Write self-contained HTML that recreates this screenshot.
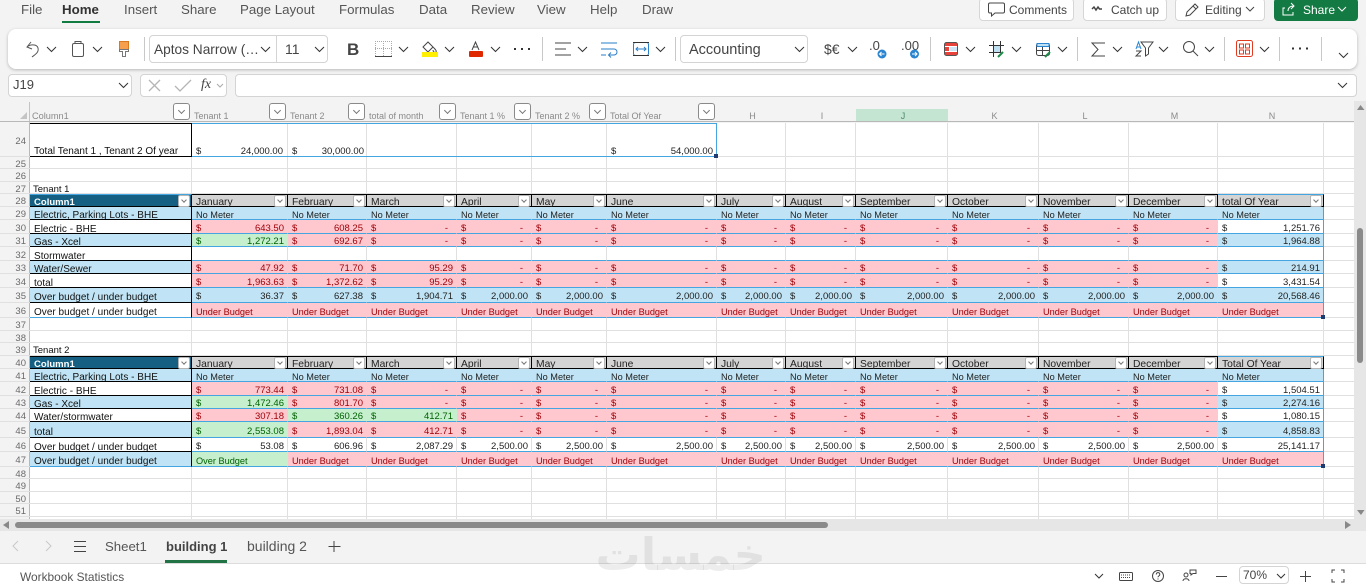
<!DOCTYPE html>
<html lang="en"><head><meta charset="utf-8"><title>Workbook</title>
<style>
html,body{margin:0;padding:0;width:1366px;height:585px;overflow:hidden;background:#f3f3f3;font-family:"Liberation Sans",sans-serif;color:#424242}
.l{position:absolute;white-space:nowrap}
.tab{top:1px;font-size:13.3px;line-height:17px;color:#555}
.btn{position:absolute;background:#fff;border:1px solid #d6d6d6;border-radius:4px;box-sizing:border-box;top:-2px;height:23px;font-size:12px;line-height:22px;color:#444;white-space:nowrap}
.box{position:absolute;background:#fff;border:1px solid #d4d4d4;border-radius:4px;box-sizing:border-box}
#rib{position:absolute;left:8px;top:29px;width:1349px;height:40px;background:#fff;border-radius:8px;box-shadow:0 1px 3px rgba(0,0,0,.25)}
#sheet{position:absolute;left:0;top:123px;width:1354px;height:396px;background:#fff;overflow:hidden}
#rh{position:absolute;left:0;top:0;width:30px;height:396px;background:#f3f3f3;border-right:1px solid #b8b8b8;box-sizing:border-box}
.v{position:absolute;top:0;width:1px;height:396px;background:#e0e0e0}
.r{position:absolute;left:0;width:1354px;box-sizing:border-box;top:calc(var(--t)*1px - 123px);height:calc(var(--h)*1px);line-height:calc(var(--h)*1px + 3px);display:grid;grid-template-rows:100%;grid-template-columns:30px 162px 96px 79px 90px 75px 75px 110px 69px 70px 92px 91px 90px 89px 106px 30px;border-bottom:1px solid #e0e0e0;font-size:9.5px;color:#222}
.r em{font-style:normal;color:#6a6a6a;text-align:right;padding-right:3px;background:#f3f3f3;border-right:1px solid #b8b8b8;font-size:9.5px}
.r b{font-weight:normal;position:relative;white-space:nowrap;box-sizing:border-box;overflow:hidden;text-align:right;padding-right:3px;border-right:1px solid transparent;border-bottom:1px solid transparent;margin-bottom:-1px}
.r i{font-style:normal;position:absolute;left:4px;top:0}
.r b.d{padding-right:8px}
.T b{border-bottom-color:#45a5e0}
.P b{background:#ffc7ce;color:#9c0006}
.U b{background:#c0e4f5;color:#222}
.L b{text-align:left;padding-left:4px;padding-right:0;font-size:9.2px}
.r b.a{text-align:left;padding-left:4px;padding-top:1px;background:#fff;color:#111;border-right-color:#000;border-bottom-color:#000;font-size:10px;letter-spacing:.02px}
.r b.au{background:#c0e4f5}
.r b.ab{border-bottom-color:#45a5e0}
.r b.n{background:#fff;color:#222;border-right-color:#45a5e0}
.r b.nu{background:#c0e4f5;color:#222}
.r b.np{background:#ffc7ce;color:#9c0006}
.r b.g{background:#c6efce;color:#006100}
.r b.z{text-align:left;padding-left:3px;color:#111}
.H b{background:#d4d4d4;color:#222;text-align:left;padding-left:4px;padding-right:0;font-size:10.3px;border-top:1px solid #000;border-right-color:#000;border-bottom-color:#000;overflow:visible;line-height:15px}
.r.H b.a{background:#156082;color:#fff;font-weight:bold;font-size:9.5px;border-top-color:#000;padding-top:0}
.r.H b.n{background:#d4d4d4;border-top-color:#45a5e0;border-bottom-color:#000;border-right-color:#000}
.H b::after{content:"";position:absolute;right:1px;top:0;width:12px;height:12px;background:#fff;border:1px solid #b5b5b5;border-radius:2px;box-sizing:border-box}
.H b::before{content:"";position:absolute;right:5px;top:3px;width:3px;height:3px;border-right:1px solid #777;border-bottom:1px solid #777;transform:rotate(45deg);z-index:2}
.ch{position:absolute;top:110px;height:12px;line-height:13px;font-size:9px;color:#8a8a8a;white-space:nowrap}
.cc{text-align:center}
.fb{position:absolute;top:103px;width:17px;height:17px;box-sizing:border-box;background:#fff;border:1px solid #8a8a8a;border-radius:3px}
.fb::before{content:"";position:absolute;left:5px;top:4px;width:4px;height:4px;border-right:1px solid #777;border-bottom:1px solid #777;transform:rotate(45deg)}
.cell24{position:absolute;top:22px;font-size:9.5px;line-height:13px;color:#222}
svg{position:absolute;left:0;top:0}
</style></head><body>

<div class="l tab" style="left:21px">File</div>
<div class="l tab" style="left:62px;font-weight:bold;color:#333">Home</div>
<div style="position:absolute;left:62px;top:21px;width:38px;height:2px;background:#107c41"></div>
<div class="l tab" style="left:124px">Insert</div>
<div class="l tab" style="left:181px">Share</div>
<div class="l tab" style="left:240px">Page Layout</div>
<div class="l tab" style="left:339px">Formulas</div>
<div class="l tab" style="left:419px">Data</div>
<div class="l tab" style="left:471px">Review</div>
<div class="l tab" style="left:537px">View</div>
<div class="l tab" style="left:590px">Help</div>
<div class="l tab" style="left:642px">Draw</div>

<div class="btn" style="left:979px;width:95px;padding-left:29px">Comments</div>
<div class="btn" style="left:1083px;width:84px;padding-left:27px">Catch up</div>
<div class="btn" style="left:1175px;width:90px;padding-left:29px">Editing</div>
<div class="btn" style="left:1274px;width:84px;padding-left:28px;background:#147a43;border-color:#147a43;color:#fff">Share</div>

<div id="rib"></div>
<div class="box" style="left:149px;top:35px;width:179px;height:28px"></div>
<div style="position:absolute;left:276px;top:36px;width:1px;height:26px;background:#d4d4d4"></div>
<div class="l" style="left:154px;top:41px;font-size:13.7px;line-height:17px;color:#444">Aptos Narrow (…</div>
<div class="l" style="left:285px;top:41px;font-size:14px;line-height:17px;color:#444">11</div>
<div class="l" style="left:347px;top:40px;font-size:17px;line-height:20px;font-weight:bold;color:#444">B</div>
<div class="box" style="left:680px;top:35px;width:128px;height:28px"></div>
<div class="l" style="left:689px;top:42px;font-size:14.5px;line-height:17px;color:#444">Accounting</div>
<div class="l" style="left:824px;top:41px;font-size:14px;line-height:17px;color:#444">$€</div>
<div class="l" style="left:869px;top:38px;font-size:13px;line-height:15px;color:#444">.0</div>
<div class="l" style="left:901px;top:38px;font-size:13px;line-height:15px;color:#444">.00</div>

<div class="box" style="left:8px;top:74px;width:124px;height:23px"></div>
<div class="l" style="left:13px;top:77px;font-size:13px;line-height:16px;color:#444">J19</div>
<div class="box" style="left:140px;top:74px;width:87px;height:23px"></div>
<div class="box" style="left:235px;top:74px;width:1122px;height:23px"></div>
<div class="l" style="left:201px;top:77px;font-size:14px;line-height:16px;font-style:italic;font-family:'Liberation Serif',serif;color:#444">fx</div>

<!-- column headers -->
<div style="position:absolute;left:29px;top:102px;width:1px;height:21px;background:#c4c4c4"></div>
<div style="position:absolute;left:856px;top:109px;width:92px;height:12px;background:#c5e5d3;border-bottom:1px solid #107c41"></div>
<div style="position:absolute;left:0;top:121px;width:1354px;height:1px;background:#b8b8b8"></div>
<div class="ch" style="left:32px;font-size:9.2px">Column1</div>
<div class="ch" style="left:194px">Tenant 1</div>
<div class="ch" style="left:290px">Tenant 2</div>
<div class="ch" style="left:369px">total of month</div>
<div class="ch" style="left:460px">Tenant 1 %</div>
<div class="ch" style="left:535px">Tenant 2 %</div>
<div class="ch" style="left:610px">Total Of Year</div>
<div class="ch cc" style="left:718px;width:69px">H</div>
<div class="ch cc" style="left:787px;width:70px">I</div>
<div class="ch cc" style="left:857px;width:92px;color:#4c8a68">J</div>
<div class="ch cc" style="left:949px;width:91px">K</div>
<div class="ch cc" style="left:1040px;width:90px">L</div>
<div class="ch cc" style="left:1130px;width:89px">M</div>
<div class="ch cc" style="left:1219px;width:106px">N</div>
<div class="fb" style="left:173px"></div>
<div class="fb" style="left:269px"></div>
<div class="fb" style="left:348px"></div>
<div class="fb" style="left:439px"></div>
<div class="fb" style="left:514px"></div>
<div class="fb" style="left:589px"></div>
<div class="fb" style="left:698px"></div>

<div id="sheet">
<div id="rh"></div>
<div class="v" style="left:191px"></div><div class="v" style="left:287px"></div><div class="v" style="left:366px"></div><div class="v" style="left:456px"></div><div class="v" style="left:531px"></div><div class="v" style="left:606px"></div><div class="v" style="left:716px"></div><div class="v" style="left:785px"></div><div class="v" style="left:855px"></div><div class="v" style="left:947px"></div><div class="v" style="left:1038px"></div><div class="v" style="left:1128px"></div><div class="v" style="left:1217px"></div><div class="v" style="left:1323px"></div>

<div class="r" style="--t:123;--h:34"><em>24</em></div>
<div style="position:absolute;left:30px;top:0;width:162px;height:34px;box-sizing:border-box;border-top:1px solid #000;border-right:1px solid #000;border-bottom:1px solid #000;background:#fff;font-size:10px;color:#111;line-height:13px;padding:21px 0 0 4px;white-space:nowrap;overflow:hidden">Total Tenant 1 , Tenant 2 Of year</div>
<div style="position:absolute;left:192px;top:0;width:525px;height:34px;box-sizing:border-box;border:1px solid #45a5e0;border-left:0"></div>
<div class="cell24" style="left:196px">$</div>
<div class="cell24" style="left:192px;width:91px;text-align:right">24,000.00</div>
<div class="cell24" style="left:292px">$</div>
<div class="cell24" style="left:288px;width:76px;text-align:right">30,000.00</div>
<div class="cell24" style="left:611px">$</div>
<div class="cell24" style="left:607px;width:106px;text-align:right">54,000.00</div>
<div style="position:absolute;left:714px;top:31px;width:4px;height:4px;background:#1f3a6e"></div>

<div class="r" style="--t:157;--h:12"><em>25</em></div>
<div class="r" style="--t:169;--h:13"><em>26</em></div>
<div class="r" style="--t:182;--h:12"><em>27</em><b class="z">Tenant 1</b></div>
<div class="r H" style="--t:194;--h:13"><em>28</em><b class="a" style="border-top-color:#45a5e0">Column1</b><b>January</b><b>February</b><b>March</b><b>April</b><b>May</b><b>June</b><b>July</b><b>August</b><b>September</b><b>October</b><b>November</b><b>December</b><b class="n">total Of Year</b></div>
<div class="r T U L" style="--t:207;--h:13"><em>29</em><b class="a au">Electric, Parking Lots - BHE</b><b>No Meter</b><b>No Meter</b><b>No Meter</b><b>No Meter</b><b>No Meter</b><b>No Meter</b><b>No Meter</b><b>No Meter</b><b>No Meter</b><b>No Meter</b><b>No Meter</b><b>No Meter</b><b class="n nu">No Meter</b></div>
<div class="r T P" style="--t:220;--h:14"><em>30</em><b class="a">Electric - BHE</b><b><i>$</i>643.50</b><b><i>$</i>608.25</b><b class="d"><i>$</i>-</b><b class="d"><i>$</i>-</b><b class="d"><i>$</i>-</b><b class="d"><i>$</i>-</b><b class="d"><i>$</i>-</b><b class="d"><i>$</i>-</b><b class="d"><i>$</i>-</b><b class="d"><i>$</i>-</b><b class="d"><i>$</i>-</b><b class="d"><i>$</i>-</b><b class="n"><i>$</i>1,251.76</b></div>
<div class="r T P" style="--t:234;--h:13"><em>31</em><b class="a au">Gas - Xcel</b><b class="g"><i>$</i>1,272.21</b><b><i>$</i>692.67</b><b class="d"><i>$</i>-</b><b class="d"><i>$</i>-</b><b class="d"><i>$</i>-</b><b class="d"><i>$</i>-</b><b class="d"><i>$</i>-</b><b class="d"><i>$</i>-</b><b class="d"><i>$</i>-</b><b class="d"><i>$</i>-</b><b class="d"><i>$</i>-</b><b class="d"><i>$</i>-</b><b class="n nu"><i>$</i>1,964.88</b></div>
<div class="r T" style="--t:247;--h:14"><em>32</em><b class="a">Stormwater</b><b></b><b></b><b></b><b></b><b></b><b></b><b></b><b></b><b></b><b></b><b></b><b></b><b class="n"></b></div>
<div class="r T P" style="--t:261;--h:13"><em>33</em><b class="a au">Water/Sewer</b><b><i>$</i>47.92</b><b><i>$</i>71.70</b><b><i>$</i>95.29</b><b class="d"><i>$</i>-</b><b class="d"><i>$</i>-</b><b class="d"><i>$</i>-</b><b class="d"><i>$</i>-</b><b class="d"><i>$</i>-</b><b class="d"><i>$</i>-</b><b class="d"><i>$</i>-</b><b class="d"><i>$</i>-</b><b class="d"><i>$</i>-</b><b class="n nu"><i>$</i>214.91</b></div>
<div class="r T P" style="--t:274;--h:14"><em>34</em><b class="a">total</b><b><i>$</i>1,963.63</b><b><i>$</i>1,372.62</b><b><i>$</i>95.29</b><b class="d"><i>$</i>-</b><b class="d"><i>$</i>-</b><b class="d"><i>$</i>-</b><b class="d"><i>$</i>-</b><b class="d"><i>$</i>-</b><b class="d"><i>$</i>-</b><b class="d"><i>$</i>-</b><b class="d"><i>$</i>-</b><b class="d"><i>$</i>-</b><b class="n"><i>$</i>3,431.54</b></div>
<div class="r T U" style="--t:288;--h:15"><em>35</em><b class="a au">Over budget / under budget</b><b><i>$</i>36.37</b><b><i>$</i>627.38</b><b><i>$</i>1,904.71</b><b><i>$</i>2,000.00</b><b><i>$</i>2,000.00</b><b><i>$</i>2,000.00</b><b><i>$</i>2,000.00</b><b><i>$</i>2,000.00</b><b><i>$</i>2,000.00</b><b><i>$</i>2,000.00</b><b><i>$</i>2,000.00</b><b><i>$</i>2,000.00</b><b class="n nu"><i>$</i>20,568.46</b></div>
<div class="r T P L" style="--t:303;--h:15"><em>36</em><b class="a ab">Over budget / under budget</b><b>Under Budget</b><b>Under Budget</b><b>Under Budget</b><b>Under Budget</b><b>Under Budget</b><b>Under Budget</b><b>Under Budget</b><b>Under Budget</b><b>Under Budget</b><b>Under Budget</b><b>Under Budget</b><b>Under Budget</b><b class="n np">Under Budget</b></div>
<div class="r" style="--t:318;--h:13"><em>37</em></div>
<div class="r" style="--t:331;--h:12"><em>38</em></div>
<div class="r" style="--t:343;--h:13"><em>39</em><b class="z">Tenant 2</b></div>
<div class="r H" style="--t:356;--h:13"><em>40</em><b class="a">Column1</b><b>January</b><b>February</b><b>March</b><b>April</b><b>May</b><b>June</b><b>July</b><b>August</b><b>September</b><b>October</b><b>November</b><b>December</b><b class="n">Total Of Year</b></div>
<div class="r T U L" style="--t:369;--h:13"><em>41</em><b class="a au">Electric, Parking Lots - BHE</b><b>No Meter</b><b>No Meter</b><b>No Meter</b><b>No Meter</b><b>No Meter</b><b>No Meter</b><b>No Meter</b><b>No Meter</b><b>No Meter</b><b>No Meter</b><b>No Meter</b><b>No Meter</b><b class="n nu">No Meter</b></div>
<div class="r T P" style="--t:382;--h:14"><em>42</em><b class="a">Electric - BHE</b><b><i>$</i>773.44</b><b><i>$</i>731.08</b><b class="d"><i>$</i>-</b><b class="d"><i>$</i>-</b><b class="d"><i>$</i>-</b><b class="d"><i>$</i>-</b><b class="d"><i>$</i>-</b><b class="d"><i>$</i>-</b><b class="d"><i>$</i>-</b><b class="d"><i>$</i>-</b><b class="d"><i>$</i>-</b><b class="d"><i>$</i>-</b><b class="n"><i>$</i>1,504.51</b></div>
<div class="r T P" style="--t:396;--h:13"><em>43</em><b class="a au">Gas - Xcel</b><b class="g"><i>$</i>1,472.46</b><b><i>$</i>801.70</b><b class="d"><i>$</i>-</b><b class="d"><i>$</i>-</b><b class="d"><i>$</i>-</b><b class="d"><i>$</i>-</b><b class="d"><i>$</i>-</b><b class="d"><i>$</i>-</b><b class="d"><i>$</i>-</b><b class="d"><i>$</i>-</b><b class="d"><i>$</i>-</b><b class="d"><i>$</i>-</b><b class="n nu"><i>$</i>2,274.16</b></div>
<div class="r T P" style="--t:409;--h:13"><em>44</em><b class="a">Water/stormwater</b><b><i>$</i>307.18</b><b class="g"><i>$</i>360.26</b><b class="g"><i>$</i>412.71</b><b class="d"><i>$</i>-</b><b class="d"><i>$</i>-</b><b class="d"><i>$</i>-</b><b class="d"><i>$</i>-</b><b class="d"><i>$</i>-</b><b class="d"><i>$</i>-</b><b class="d"><i>$</i>-</b><b class="d"><i>$</i>-</b><b class="d"><i>$</i>-</b><b class="n"><i>$</i>1,080.15</b></div>
<div class="r T P" style="--t:422;--h:16"><em>45</em><b class="a au">total</b><b class="g"><i>$</i>2,553.08</b><b><i>$</i>1,893.04</b><b><i>$</i>412.71</b><b class="d"><i>$</i>-</b><b class="d"><i>$</i>-</b><b class="d"><i>$</i>-</b><b class="d"><i>$</i>-</b><b class="d"><i>$</i>-</b><b class="d"><i>$</i>-</b><b class="d"><i>$</i>-</b><b class="d"><i>$</i>-</b><b class="d"><i>$</i>-</b><b class="n nu"><i>$</i>4,858.83</b></div>
<div class="r T" style="--t:438;--h:14"><em>46</em><b class="a">Over budget / under budget</b><b><i>$</i>53.08</b><b><i>$</i>606.96</b><b><i>$</i>2,087.29</b><b><i>$</i>2,500.00</b><b><i>$</i>2,500.00</b><b><i>$</i>2,500.00</b><b><i>$</i>2,500.00</b><b><i>$</i>2,500.00</b><b><i>$</i>2,500.00</b><b><i>$</i>2,500.00</b><b><i>$</i>2,500.00</b><b><i>$</i>2,500.00</b><b class="n"><i>$</i>25,141.17</b></div>
<div class="r T P L" style="--t:452;--h:15"><em>47</em><b class="a au ab">Over budget / under budget</b><b class="g">Over Budget</b><b>Under Budget</b><b>Under Budget</b><b>Under Budget</b><b>Under Budget</b><b>Under Budget</b><b>Under Budget</b><b>Under Budget</b><b>Under Budget</b><b>Under Budget</b><b>Under Budget</b><b>Under Budget</b><b class="n np">Under Budget</b></div>
<div class="r" style="--t:467;--h:12"><em>48</em></div>
<div class="r" style="--t:479;--h:13"><em>49</em></div>
<div class="r" style="--t:492;--h:12"><em>50</em></div>
<div class="r" style="--t:504;--h:13"><em>51</em></div>
<div style="position:absolute;left:1321px;top:192px;width:4px;height:4px;background:#1f3a6e"></div>
<div style="position:absolute;left:1321px;top:341px;width:4px;height:4px;background:#1f3a6e"></div>
</div>

<!-- scrollbars -->
<div style="position:absolute;left:1354px;top:101px;width:12px;height:430px;background:#e6e6e6"></div>
<div style="position:absolute;left:1357px;top:228px;width:6px;height:135px;background:#8a8a8a;border-radius:3px"></div>
<div style="position:absolute;left:0;top:519px;width:1366px;height:12px;background:#e6e6e6"></div>
<div style="position:absolute;left:15px;top:522px;width:813px;height:6px;background:#8a8a8a;border-radius:3px"></div>

<!-- sheet tabs -->
<div class="l" style="left:105px;top:538px;font-size:13.2px;line-height:17px;color:#555">Sheet1</div>
<div class="l" style="left:166px;top:538px;font-size:13px;line-height:17px;font-weight:bold;color:#444">building 1</div>
<div style="position:absolute;left:165px;top:560px;width:62px;height:3px;background:#217346"></div>
<div class="l" style="left:247px;top:538px;font-size:14px;line-height:17px;color:#555">building 2</div>
<div style="position:absolute;left:0;top:563px;width:1366px;height:22px;background:#fff;border-top:1px solid #dcdcdc;box-sizing:border-box"></div>
<div class="l" style="left:20px;top:570px;font-size:11.9px;line-height:14px;color:#555">Workbook Statistics</div>
<div class="box" style="left:1239px;top:566px;width:50px;height:18px"></div>
<div class="l" style="left:1243px;top:568px;font-size:12px;line-height:15px;color:#444">70%</div>

<svg width="1366" height="585" viewBox="0 0 1366 585" fill="none" stroke="#444" stroke-width="1">
<!-- top button icons -->
<path d="M990 3h13a1.500 1.500 0 0 1 1.500 1.500v7a1.500 1.500 0 0 1-1.500 1.500h-8l-3.500 3v-3h-1.500a1.500 1.500 0 0 1-1.500-1.500v-7A1.500 1.500 0 0 1 990 3z"/>
<path d="M1092 9l2-2 2 3 2-3 1.500 2 2.500 0" stroke-width="1.500"/>
<path d="M1186 16l1-4 8-8 3 3-8 8zM1193 6l3 3"/>
<path d="M1246 7l4 4 4-4"/>
<path d="M1338 7l4 4 4-4" stroke="#fff"/>
<path d="M1285 8h-2v7h10v-3M1288 11c0-3 2-5 6-5M1291 3l3 3-3 3" stroke="#fff"/>
<!-- chevrons -->
<path d="M47 47l4.500 4.500 4.500-4.500M93 47l4.500 4.500 4.500-4.500M261 47l4.500 4.500 4.500-4.500M315 47l4.500 4.500 4.500-4.500M399 47l4.500 4.500 4.500-4.500M445 47l4.500 4.500 4.500-4.500M491 47l4.500 4.500 4.500-4.500M578 47l4.500 4.500 4.500-4.500M656 47l4.500 4.500 4.500-4.500M795 47l4.500 4.500 4.500-4.500M848 47l4.500 4.500 4.500-4.500M966 47l4.500 4.500 4.500-4.500M1012 47l4.500 4.500 4.500-4.500M1058 47l4.500 4.500 4.500-4.500M1113 47l4.500 4.500 4.500-4.500M1159 47l4.500 4.500 4.500-4.500M1205 47l4.500 4.500 4.500-4.500M1260 47l4.500 4.500 4.500-4.500M1339 53l4.500 4.500 4.500-4.500M119 83l4.500 4.500 4.500-4.500M1338 83l4.500 4.500 4.500-4.500M1095 574l4 4 4-4M1277 574l4 4 4-4" stroke="#333"/>
<path d="M217 84l3 3 3-3" stroke="#aaa"/>
<!-- separators -->
<path d="M144.500 37v24M542.500 37v24M675.500 37v24M930.500 37v24M1077.500 37v24M1224.500 37v24M1279.500 37v24M1321.500 37v24" stroke="#c8c8c8"/>
<!-- undo -->
<path d="M31 42l-4 5 5 2M27 47c3-3 10-3 11 1 1 4-2 6-6 9" stroke="#555"/>
<!-- clipboard -->
<rect x="72.500" y="43.500" width="11" height="13" rx="1.500" stroke="#555"/><path d="M75 43v-1.500h6V43" stroke="#555"/>
<!-- painter -->
<path d="M119.500 41.500h9v8h-9z" fill="#f6a04d" stroke="#d87a20"/><path d="M119.500 49.500h9v2h-3v5h-3v-5h-3z" stroke="#777" fill="#fff"/>
<!-- borders -->
<path d="M375.500 41v15M383.500 41v15M391.500 41v15M375 41.500h17M375 48.500h17" stroke="#aaa" stroke-dasharray="1 1"/><path d="M375 56.500h17" stroke="#444"/>
<!-- bucket -->
<path d="M428 42l-5 5 5 5 5-5zM433 47c2 2 4 4 3 5s-3 0-3-2" stroke="#444"/><rect x="422" y="52" width="16" height="5" fill="#ffef00" stroke="none"/>
<!-- font color -->
<path d="M472 50l3.500-8 3.500 8M473.500 47h4" stroke="#444"/><rect x="469" y="51" width="14" height="6" rx="1" fill="#e02800" stroke="none"/>
<!-- dots -->
<path d="M514 49h2M521 49h2M528 49h2M1292 48.500h2M1299 48.500h2M1306 48.500h2" stroke="#333" stroke-width="2"/>
<!-- align -->
<path d="M555 43h16M555 49h11M555 55h16" stroke="#444"/>
<!-- wrap -->
<path d="M601 43h16M601 49h13a2.500 2.500 0 0 1 0 6h-5M611 52.500l-2.500 2.500 2.500 2.500" stroke="#2a7fc9"/><path d="M601 55h5" stroke="#2a7fc9"/>
<!-- merge -->
<rect x="633.500" y="42.500" width="15" height="13" rx="2" stroke="#2a7fc9"/><path d="M633 42.500h16M633 55.500h16" stroke="#333"/><path d="M636 49h10M638 47l-2 2 2 2M644 47l2 2-2 2" stroke="#2a7fc9"/>
<!-- decimals -->
<circle cx="882" cy="54" r="4.500" fill="#2a85d0" stroke="none"/><path d="M884.500 54h-5M881.500 52l-2 2 2 2" stroke="#fff"/>
<circle cx="914.500" cy="54" r="4.500" fill="#2a85d0" stroke="none"/><path d="M912 54h5M915 52l2 2-2 2" stroke="#fff"/>
<!-- conditional format -->
<rect x="944.500" y="42.500" width="13" height="13" rx="2" fill="#e8423a" stroke="#555"/><path d="M945 46.500h12M945 51.500h12M949.500 46v6" stroke="#fff"/><rect x="950" y="47" width="7" height="4" fill="#cfe4f5" stroke="none"/>
<!-- freeze -->
<path d="M993.500 41v16M1000.500 41v12M989 45.500h15M989 52.500h12" stroke="#333"/><rect x="994" y="46" width="6" height="6" fill="#bfe0f2" stroke="none"/><path d="M998 57l5-5" stroke="#1d8a4a" stroke-width="2"/>
<!-- format table -->
<rect x="1036.500" y="43.500" width="13" height="12" rx="2" stroke="#444"/><path d="M1037 43.500h12v3h-12z" fill="#bfe0f2" stroke="#2a85d0"/><path d="M1037 50.500h12M1042.500 47v8" stroke="#444"/><path d="M1045 57l5-5" stroke="#1d8a4a" stroke-width="2"/>
<!-- sigma -->
<path d="M1105 43h-13l6 6.500-6 6.500h13" stroke="#444"/>
<!-- sort -->
<path d="M1141 42h12l-4.500 6v6l-3 2v-8z" stroke="#444"/><path d="M1136 49l2.500-7 2.500 7M1137 47h3" stroke="#2a85d0"/><path d="M1136 51h5l-5 5h5" stroke="#444"/>
<!-- search -->
<circle cx="1189" cy="47" r="5.500" stroke="#444"/><path d="M1193 51l5 5" stroke="#444"/>
<!-- apps -->
<rect x="1236.500" y="40.500" width="16" height="16" rx="2" stroke="#e03a20"/><rect x="1239.500" y="44" width="4" height="4" stroke="#e03a20"/><rect x="1245.500" y="44" width="4" height="4" stroke="#e03a20"/><rect x="1239.500" y="50" width="4" height="4" stroke="#e03a20"/><rect x="1245.500" y="50" width="4" height="4" stroke="#e03a20"/>
<!-- formula x, check -->
<path d="M149 80l11 11M160 80l-11 11" stroke="#b5b5b5" stroke-width="1.300"/><path d="M175 86l5 5 11-11" stroke="#b5b5b5" stroke-width="1.300"/>
<!-- corner -->
<path d="M27 112v7h-7z" fill="#c4c4c4" stroke="none"/>
<!-- scroll arrows -->
<path d="M1357 110l3.500-5 4 5zM1357 510h7.500l-3.500 5zM9 521v8l-6-4zM1345 521l6 4-6 4z" fill="#888" stroke="none"/>
<!-- sheet nav -->
<path d="M18 541l-5 5 5 5M46 541l5 5-5 5" stroke="#c8c8c8"/>
<path d="M74 541.500h12M74 546.500h12M74 551.500h12M334 541v11M328.500 546.500h12" stroke="#444"/>
<!-- status icons -->
<rect x="1119.500" y="572.500" width="13" height="8" rx="1" stroke="#444"/><path d="M1121 575h10M1121 577.500h10" stroke="#444" stroke-dasharray="1 1"/>
<circle cx="1158" cy="576" r="5.500" stroke="#444"/><path d="M1156.300 574.500c0-2.500 3.500-2.500 3.500 0 0 1.500-1.800 1.300-1.800 2.800M1158 578.500v1" stroke="#444"/>
<circle cx="1186" cy="575" r="2" stroke="#444"/><path d="M1183 581c0-3 6-3 6 0M1190 570h6v3.500h-3l-2 1.500v-1.500h-1z" stroke="#444"/>
<path d="M1216 576.500h11M1300 576.500h11M1305.500 571v11" stroke="#444"/>
<path d="M1332 573v-3h3M1341 570h3v3M1344 579v3h-3M1335 582h-3v-3" stroke="#444"/>
</svg>

<div class="l" dir="rtl" style="left:600px;top:525px;width:166px;text-align:center;font-family:'DejaVu Sans',sans-serif;font-weight:bold;font-size:45px;line-height:60px;color:rgba(0,0,0,.07)">خمسات</div>
</body></html>
